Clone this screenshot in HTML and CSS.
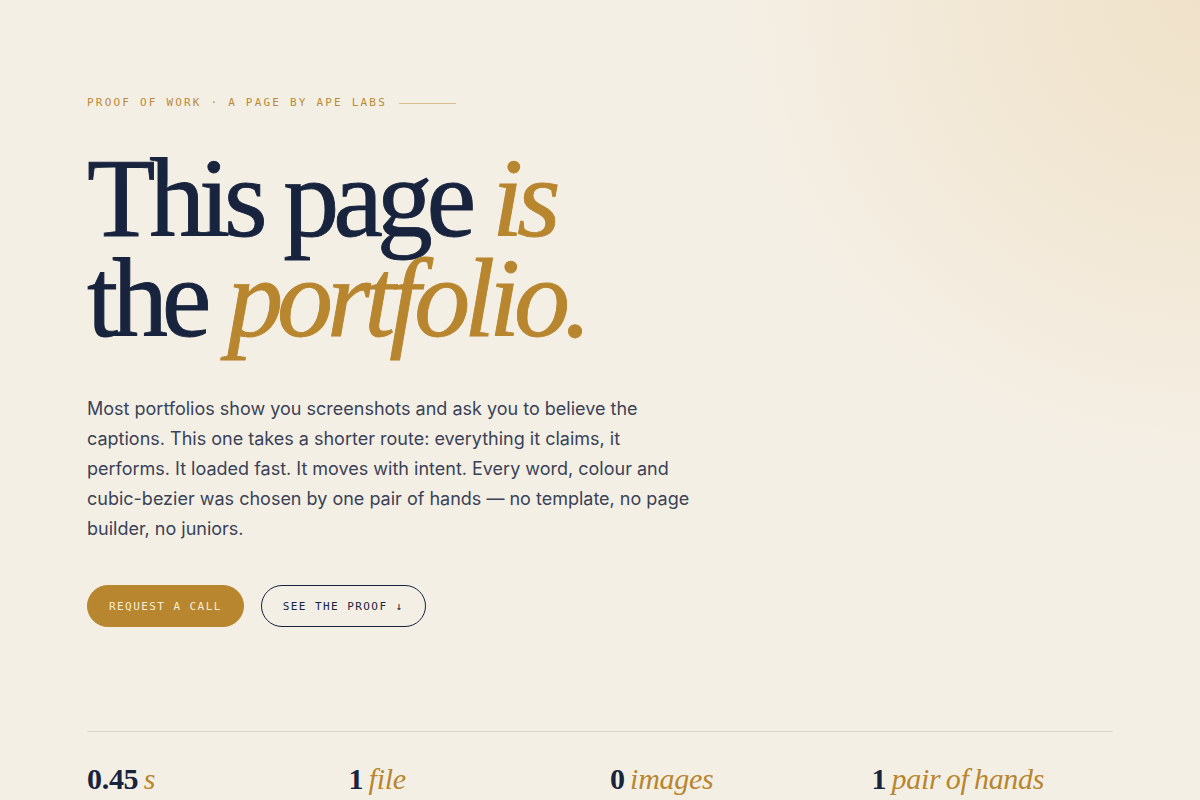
FILE: index.html
```html
<!DOCTYPE html>
<html lang="en">
<head>
<meta charset="utf-8">
<title>This page is the portfolio — Ape Labs</title>
<link rel="stylesheet" href="styles.css">
</head>
<body>
<main class="hero">
  <p class="eyebrow"><span>Proof of work · A page by Ape Labs</span><span class="eyebrow-rule"></span></p>
  <h1 class="title"><span class="title-line">This page <em>is</em></span><span class="title-line">the <em>portfolio.</em></span></h1>
  <p class="lede">Most portfolios show you screenshots and ask you to believe the captions. This one takes a shorter route: everything it claims, it performs. It loaded fast. It moves with intent. Every word, colour and cubic-bezier was chosen by one pair of hands — no template, no page builder, no juniors.</p>
  <div class="actions">
    <a class="btn btn-solid" href="#">Request a call</a>
    <a class="btn btn-outline" href="#">See the proof ↓</a>
  </div>
  <div class="stats">
    <div class="stat"><span class="num">0.45</span> <em>s</em></div>
    <div class="stat"><span class="num">1</span> <em>file</em></div>
    <div class="stat"><span class="num">0</span> <em>images</em></div>
    <div class="stat"><span class="num">1</span> <em>pair of hands</em></div>
  </div>
</main>
</body>
</html>
```

FILE: styles.css
```css
* { box-sizing: border-box; }
html, body { margin: 0; height: 100%; }
body {
  background-color: #f4efe5;
  background-image: radial-gradient(circle at 100% 0%, #f0e2c9 0px, rgba(240,226,201,0.6) 220px, rgba(244,239,229,0) 470px);
  font-family: "Inter", "Liberation Sans", sans-serif;
  color: #18233d;
  overflow: hidden;
}
.hero {
  padding: 96px 87px 0;
}
.eyebrow {
  display: flex;
  align-items: center;
  gap: 12px;
  margin: 0;
  font-family: "DejaVu Sans Mono", "Liberation Mono", monospace;
  font-size: 11px;
  letter-spacing: 0.2em;
  text-transform: uppercase;
  color: #b98a35;
  line-height: 14px;
}
.eyebrow-rule {
  width: 57px;
  height: 1px;
  background: #d7c190;
}
.title {
  margin: 38px 0 0;
  font-family: "Liberation Serif", "Times New Roman", serif;
  font-weight: 400;
  font-size: 112px;
  line-height: 100px;
  letter-spacing: -0.055em;
  color: #18233d;
  -webkit-text-stroke: 0.9px currentColor;
}
.title-line {
  display: block;
}
.title em {
  color: #b8862e;
  font-style: italic;
}
.lede {
  margin: 46px 0 0;
  max-width: 620px;
  font-size: 18px;
  line-height: 30px;
  color: #3a4257;
}
.actions {
  display: flex;
  gap: 17px;
  margin-top: 41px;
}
.btn {
  display: inline-flex;
  align-items: center;
  justify-content: center;
  height: 42px;
  padding: 0 21px;
  border-radius: 21px;
  font-family: "DejaVu Sans Mono", "Liberation Mono", monospace;
  font-size: 11px;
  letter-spacing: 0.13em;
  text-transform: uppercase;
  text-decoration: none;
}
.btn-solid {
  background: #b8862e;
  color: #f6ecd6;
  border: 1px solid #b8862e;
}
.btn-outline {
  color: #18233d;
  border: 1px solid #18233d;
}
.stats {
  display: grid;
  grid-template-columns: repeat(4, 1fr);
  gap: 20px;
  margin-top: 104px;
  border-top: 1px solid #dcd6c9;
  padding-top: 29px;
}
.stat {
  font-family: "Liberation Serif", "Times New Roman", serif;
  font-size: 30px;
  line-height: 36px;
  letter-spacing: -0.01em;
  word-spacing: -0.06em;
  color: #18233d;
}
.stat .num { font-weight: 700; }
.stat em {
  color: #b8862e;
  font-style: italic;
}
```
